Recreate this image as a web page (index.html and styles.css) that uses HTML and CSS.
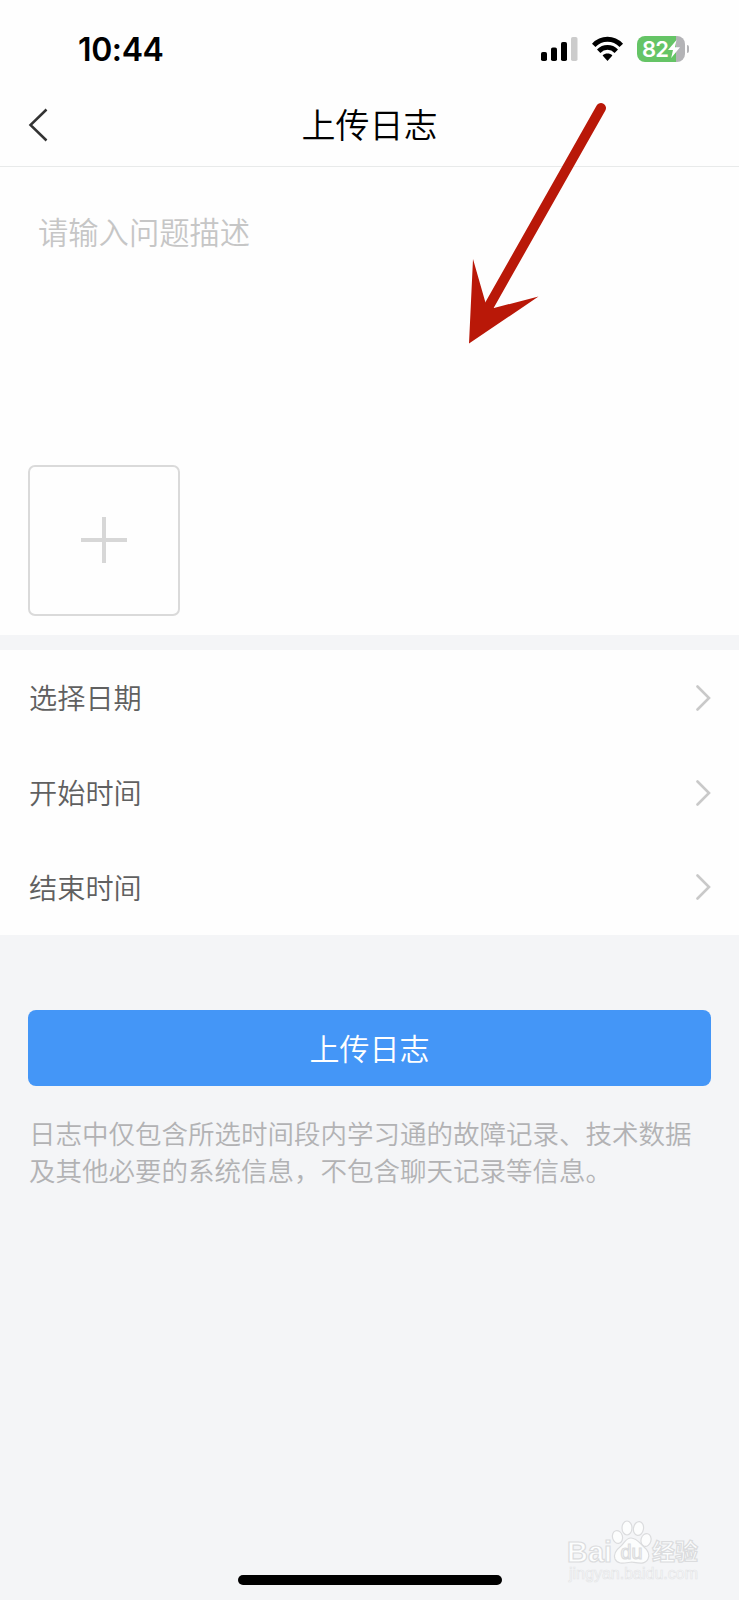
FILE: index.html
```
<!DOCTYPE html>
<html lang="zh-CN">
<head>
<meta charset="utf-8">
<title>上传日志</title>
<link rel="stylesheet" href="styles.css">
</head>
<body>
<div class="screen">
  <header class="status">
    <span class="time">10:44</span>
    <div class="indicators">
      <svg class="signal" width="38" height="26" viewBox="0 0 38 26">
        <rect x="0" y="16" width="6" height="9" rx="1.8"/>
        <rect x="10" y="11.5" width="6" height="13.5" rx="1.8"/>
        <rect x="20" y="6" width="6" height="19" rx="1.8"/>
        <rect x="30" y="1" width="6.5" height="24" rx="1.8" fill="#ccc"/>
      </svg>
      <svg class="wifi" width="32" height="26" viewBox="0 0 32 26">
        <g fill="none" stroke="#000" stroke-width="4.8">
          <path d="M1.700 9.4C9.500 1.2 21.500 1.2 29.300 9.4"/>
          <path d="M6.700 15.2C11.7 10.2 19.3 10.2 24.3 15.2"/>
        </g>
        <path d="M10.600 19.4C13.3 16.8 17.700 16.8 20.400 19.4L15.500 25Z"/>
      </svg>
      <div class="battery">
        <div class="battery-body"><span>82</span>
          <svg width="12" height="18" viewBox="0 0 12 18"><path d="M8.500 0L0 10H5L3.2 18L12 7.2H7Z" fill="#fff"/></svg>
        </div>
        <div class="battery-cap"></div>
      </div>
    </div>
  </header>
  <nav class="nav">
    <svg class="back" width="20" height="36" viewBox="0 0 20 36"><path d="M18.500 2.500L2.500 18L18.500 33.500" fill="none" stroke="#333" stroke-width="2.5"/></svg>
    <h1 class="title">上传日志</h1>
  </nav>
  <main>
    <section class="describe">
      <p class="placeholder">请输入问题描述</p>
      <div class="add">
        <svg width="46" height="46" viewBox="0 0 46 46"><path d="M23 0V46M0 23H46" stroke="#d7d7d7" stroke-width="4"/></svg>
      </div>
    </section>
    <section class="rows">
      <div class="row"><span>选择日期</span><svg width="15" height="26" viewBox="0 0 15 26"><path d="M1.5 1.5L13 13L1.5 24.5"/></svg></div>
      <div class="row"><span>开始时间</span><svg width="15" height="26" viewBox="0 0 15 26"><path d="M1.5 1.5L13 13L1.5 24.5"/></svg></div>
      <div class="row"><span>结束时间</span><svg width="15" height="26" viewBox="0 0 15 26"><path d="M1.5 1.5L13 13L1.5 24.5"/></svg></div>
    </section>
    <div class="submit">上传日志</div>
    <p class="note">日志中仅包含所选时间段内学习通的故障记录、技术数据<br>及其他必要的系统信息，不包含聊天记录等信息。</p>
  </main>
  <div class="home-bar"></div>
  <svg class="arrow" width="80" height="250" viewBox="0 0 80 250">
    <path d="M132 6L20 204" stroke="#b91808" stroke-width="10" stroke-linecap="round"/>
    <path d="M0 241.5L4 157L16.6 201L25 206L69.500 194.500Z" fill="#b91808"/>
  </svg>
  <svg class="watermark" width="140" height="70" viewBox="0 0 140 70">
    <g fill="#fcfdfd" stroke="#dbdcde" stroke-width="1.2">
      <text class="mark-latin" x="1" y="45.500" textLength="45" lengthAdjust="spacingAndGlyphs">Bai</text>
      <ellipse cx="51.500" cy="21" rx="5" ry="6.500" transform="rotate(-15 51.500 21)"/>
      <ellipse cx="61" cy="12" rx="5" ry="7"/>
      <ellipse cx="72.500" cy="12.500" rx="5" ry="7" transform="rotate(10 72.500 12.500)"/>
      <ellipse cx="80" cy="24" rx="5" ry="6.500" transform="rotate(15 80 24)"/>
      <path d="M65 22C70 22 73 26 77 30C83 35 84 39 82 43C79 49 72 47 66 46C58 47 52 49 49 43C47 38 50 34 55 30C59 26 60 22 65 22Z"/>
      <text class="mark-du" x="54.500" y="43" textLength="22" lengthAdjust="spacingAndGlyphs">du</text>
      <text class="mark-cjk" x="86" y="44">经验</text>
    </g>
    <text class="mark-url" x="3" y="63" textLength="129" lengthAdjust="spacingAndGlyphs">jingyan.baidu.com</text>
  </svg>
</div>
</body>
</html>
```
FILE: styles.css
```
* { box-sizing: border-box; margin: 0; padding: 0; }
body { background: #f4f5f7; font-family: "Noto Sans CJK SC", sans-serif; }
.screen { position: relative; width: 739px; height: 1600px; overflow: hidden; display: flex; flex-direction: column; background: #f4f5f7; }
.status { height: 98px; background: #fefefe; display: flex; justify-content: space-between; align-items: center; padding: 0 50px 0 78px; }
.time { font: 600 32px/40px Inter, sans-serif; letter-spacing: -0.4px; padding-top: 2px; }
.indicators { display: flex; align-items: center; }
.wifi { margin-left: 13px; }
.battery { display: flex; align-items: center; margin-left: 13px; gap: 2px; }
.battery-body { width: 48px; height: 26px; border-radius: 8px; background: linear-gradient(to right, #65c466 82%, #b3b3b6 82%); color: #fff; display: flex; align-items: center; justify-content: center; font: 600 22px/26px Inter, sans-serif; letter-spacing: -1px; }
.battery-cap { width: 2px; height: 8px; border-radius: 0 2px 2px 0; background: #b3b3b6; }
.nav { height: 69px; background: #fefefe; border-bottom: 1px solid #e8eaea; display: grid; grid-template-columns: 60px 1fr 60px; align-items: center; padding: 0 28px; }
.back { margin-top: -15px; }
.title { font-size: 34px; font-weight: 350; line-height: 40px; color: #000; text-align: center; margin-top: -16px; }
.describe { height: 468px; background: #fefefe; padding: 42px 28px 0; }
.placeholder { height: 255.5px; padding-left: 10px; font-size: 30.3px; font-weight: 350; line-height: 44px; color: #c6c6c6; }
.add { width: 152px; height: 151px; border: 2px solid #dadada; border-radius: 7px; display: flex; align-items: center; justify-content: center; }
.rows { margin-top: 15px; height: 285px; background: #fefefe; display: grid; grid-template-rows: repeat(3, 94.8px); }
.row { display: flex; align-items: center; justify-content: space-between; padding: 0 28px; font-size: 28.2px; font-weight: 350; color: #606060; }
.row span { padding-left: 1px; margin-top: -1px; }
.row svg { margin-top: 1px; }
.row path { fill: none; stroke: #c9c9c9; stroke-width: 2.6; stroke-linecap: round; }
.submit { margin: 75px 28px 0; height: 76px; border-radius: 8px; background: #4496f7; color: #fff; font-size: 30px; font-weight: 350; line-height: 75px; text-align: center; }
.note { margin: 28px 0 0 29px; font-size: 26.5px; font-weight: 350; line-height: 37px; color: #b2b2b4; white-space: nowrap; }
.home-bar { position: absolute; left: 238px; top: 1575px; width: 264px; height: 10px; border-radius: 5px; background: #000; }
.arrow { position: absolute; left: 469px; top: 102px; overflow: visible; }
.watermark { position: absolute; left: 566px; top: 1516px; }
.mark-latin { font: 700 30px "Liberation Sans", sans-serif; }
.mark-du { font: 400 21px "Liberation Sans", sans-serif; }
.mark-cjk { font: 700 23px "Noto Sans CJK SC", sans-serif; }
.mark-url { font: 400 16px "Liberation Sans", sans-serif; fill: #fcfdfd; stroke: #e4e5e7; stroke-width: .7px; }
```
